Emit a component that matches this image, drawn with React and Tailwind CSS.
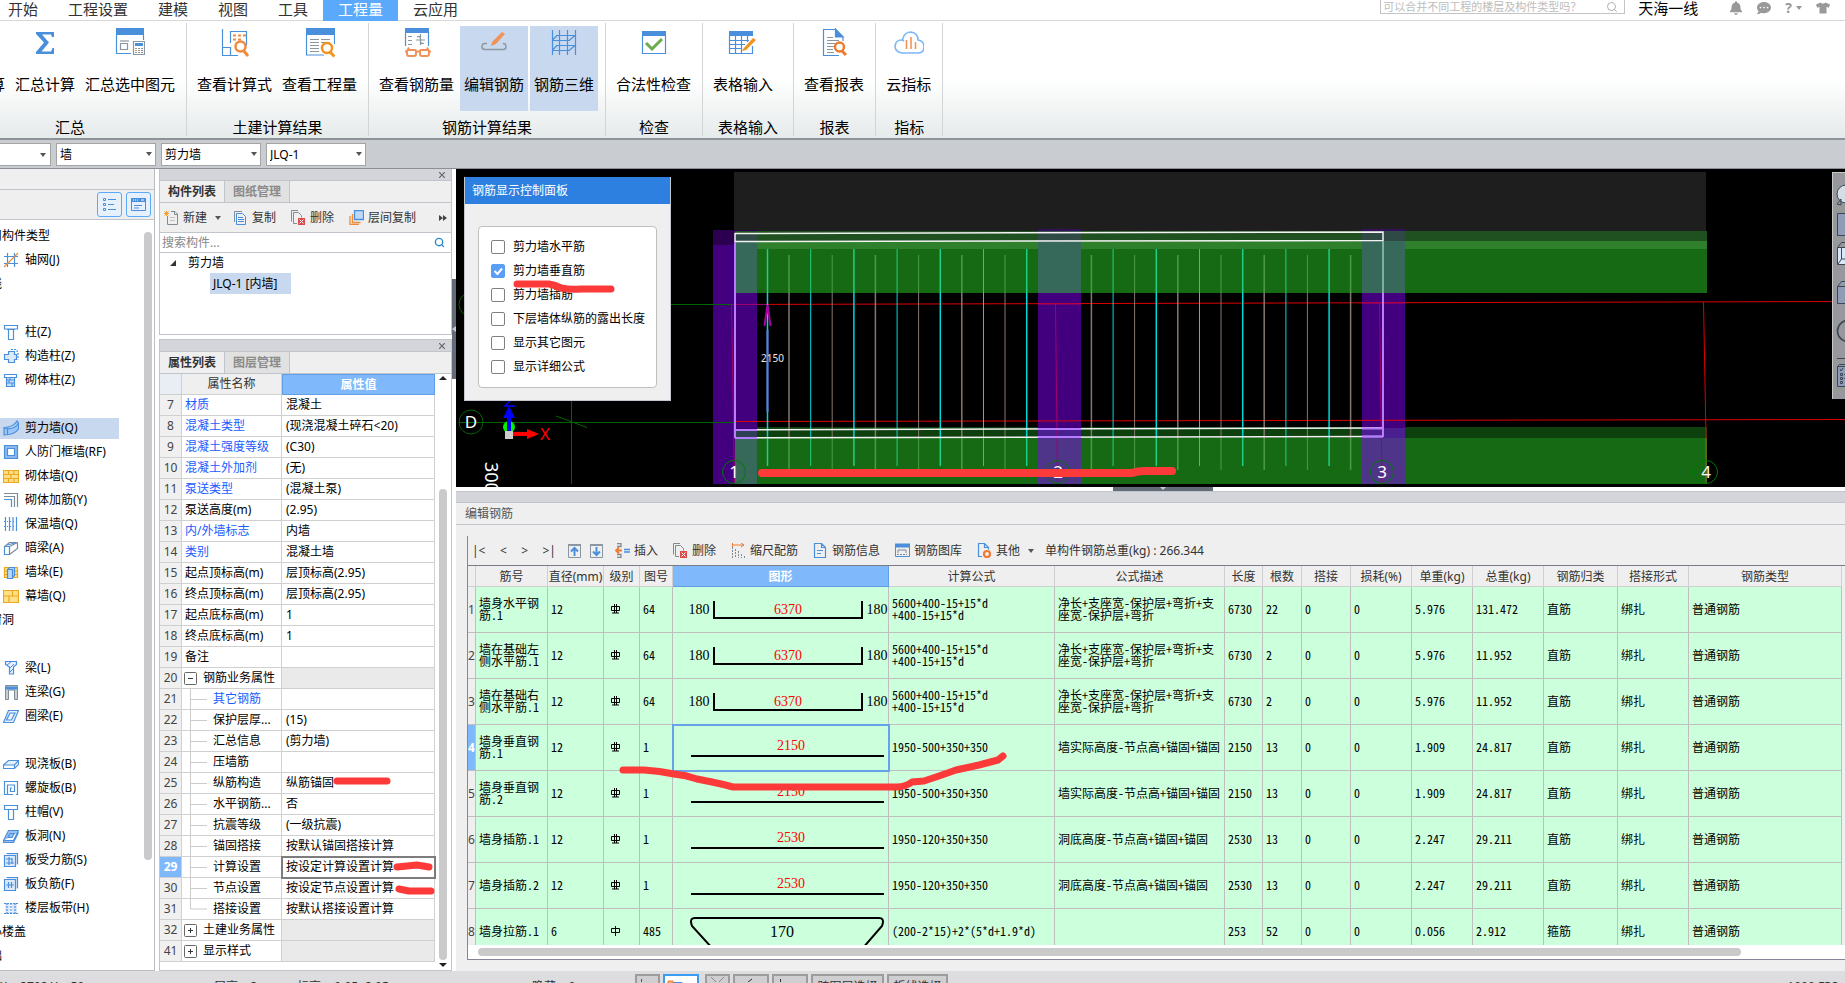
import { Search } from "lucide-react";
import { FaBell, FaCommentDots, FaTshirt } from "react-icons/fa";
import clsx from "clsx";

const BLUE = "#4a8fdc";
const ORANGE = "#f08a3c";

const tabs = ["开始", "工程设置", "建模", "视图", "工具", "工程量", "云应用"];

const ribbonGroups = [
  {
    label: "汇总",
    className: "-ml-[46px] w-[232px] justify-end pr-[7px]",
    items: [
      { label: "算" },
      { label: "汇总计算", icon: "sigma" },
      { label: "汇总选中图元", icon: "sumSelected" },
    ],
  },
  {
    label: "土建计算结果",
    className: "pr-[7px] pl-1.5",
    items: [
      { label: "查看计算式", icon: "formula" },
      { label: "查看工程量", icon: "quantity" },
    ],
  },
  {
    label: "钢筋计算结果",
    className: "pr-[7px] pl-1.5",
    items: [
      { label: "查看钢筋量", icon: "rebarQty" },
      { label: "编辑钢筋", icon: "rebarEdit", active: true },
      { label: "钢筋三维", icon: "rebar3d", active: true },
    ],
  },
  {
    label: "检查",
    className: "pr-[7px] pl-1.5",
    items: [{ label: "合法性检查", icon: "check" }],
  },
  {
    label: "表格输入",
    className: "pr-4 pl-1.5",
    items: [{ label: "表格输入", icon: "sheet" }],
  },
  {
    label: "报表",
    className: "pr-[7px] pl-1.5",
    items: [{ label: "查看报表", icon: "report" }],
  },
  {
    label: "指标",
    className: "pr-[7px] pl-1.5",
    items: [{ label: "云指标", icon: "cloud" }],
  },
];

const ribbonIcons = {
  sigma: (
    <path
      d="M6 4h18v5h-2l-1-2.5H12l7 8-7.5 9H21l1.500-3.500H24V26H6v-2l8-9.500L6 6z"
      fill={BLUE}
    />
  ),
  sumSelected: (
    <g fill="none" stroke={BLUE} strokeWidth="1.200">
      <path d="M1 0h28v7H1z" fill={BLUE} stroke="none" />
      <path d="M1.500 7v18.500H16M28.500 7v5" />
      <path d="M5 13h9" stroke="#8a979f" />
      <path d="M5.500 15.500h7v6h-7z" stroke="#8a979f" />
      <path d="M18.500 13.500h11v13h-11z" fill="#fff" stroke="#8a979f" />
      <path d="M20 15h8v3h-8z" fill={BLUE} stroke="none" />
      <path
        d="M20 20.500h2m1 0h2m1 0h2M20 22.500h2m1 0h2m1 0h2M20 24.500h2m1 0h2m1 0h2"
        stroke="#8a979f"
      />
      <path d="M20 22.500h2" stroke={ORANGE} />
    </g>
  ),
  formula: (
    <g fill="none" stroke={BLUE} strokeWidth="1.200">
      <path d="M2.500 1v26.500H18M2.500 19.500h8v8M10.500 15V3.500h16v14" />
      <path
        d="M13 7.500h3m2 0h3m2 0h3M13 11.500h3m2 0h3"
        stroke={ORANGE}
        strokeWidth="2"
      />
      <circle cx="20.500" cy="18.500" r="5" stroke={ORANGE} strokeWidth="2.500" fill="#fff" />
      <path d="M23 22l5 6" stroke={ORANGE} strokeWidth="3" />
    </g>
  ),
  quantity: (
    <g fill="none" stroke={BLUE} strokeWidth="1.200">
      <path d="M1 0h29v7H1z" fill={BLUE} stroke="none" />
      <path d="M1.500 7v20H19M29.500 7v9" />
      <path
        d="M5 11.500h9m2 0h9M5 14.500h9m2 0h9M5 17.500h9M5 20.500h9M5 23.500h9"
        stroke="#8a979f"
      />
      <circle cx="22" cy="20" r="5" stroke="#f0941e" strokeWidth="2.500" fill="#fff" />
      <path d="M25 24l4.500 4.500" stroke="#f0941e" strokeWidth="3" />
    </g>
  ),
  rebarQty: (
    <g fill="none" stroke={BLUE} strokeWidth="1.200">
      <path d="M3 0h24v5H3z" fill={BLUE} stroke="none" />
      <path d="M3.500 5v13M26.500 5v13" />
      <path
        d="M6 8.500h4M6 12.500h4M6 16.500h4M14 12h9M18.500 6v11M15 9q3.500-2 3.500 3M22 15q-3.500 2-3.500-3"
        stroke="#8a979f"
      />
      <g stroke="#f0935a" strokeWidth="2">
        <path d="M5 23q0-1 1-1h7q1 0 1 1v3q0 2-2 2H7q-2 0-2-2zM18 23q0-1 1-1h7q1 0 1 1v3q0 2-2 2h-5q-2 0-2-2zM14 23.500h4M3 23.500h2l2-4M29 23.500h-2l-2-4" />
      </g>
    </g>
  ),
  rebarEdit: (
    <g fill="none" strokeWidth="1.400">
      <path d="M8 15.500H6q-3 0-3 3.500 0 2.500 3 2.500h18q3 0 3-2.500 0-3.500-3-3.500" stroke="#8a979f" />
      <path d="M12 18l1-4L23 4l3 2-9 10z" fill="#f0935a" />
    </g>
  ),
  rebar3d: (
    <path
      d="M3.500 2v25M10.500 2v25M18.500 2v25M26.500 2v25M3 12.500h18M3 22.500h18M7 7.500h20M7 17.500h20M3 12.500l5-5M3 22.500l5-5M20 12.500l6-5M20 22.500l6-5"
      fill="none"
      stroke={BLUE}
      strokeWidth="1.200"
    />
  ),
  check: (
    <g fill="none">
      <path d="M3 3h24v5H3z" fill={BLUE} />
      <path d="M3.500 8v17.500h23V8" stroke={BLUE} strokeWidth="1.200" />
      <path d="M7 15l6 6 10-10" stroke="#6cab4f" strokeWidth="3" />
    </g>
  ),
  sheet: (
    <g fill="none" stroke={BLUE} strokeWidth="1.200">
      <path d="M1 3h24v5H1z" fill={BLUE} stroke="none" />
      <path d="M1.500 8v17.500h23V18M1 12.500h20M1 16.500h16M1 20.500h13M7.500 8v17M13.500 8v17M19.500 8v6" />
      <path d="M15 21l10-11 3 2-10 10-4 1z" fill="#f0941e" stroke="none" />
    </g>
  ),
  report: (
    <g fill="none" stroke={BLUE} strokeWidth="1.200">
      <path d="M20 27.500H4.500v-26h12L24 9v4" />
      <path d="M16.500 1v8H24z" fill={BLUE} />
      <path
        d="M8 9.500h6M8 12.500h12M8 15.500h8M8 18.500h7M8 21.500h6M8 24.500h7"
        stroke="#8a979f"
      />
      <circle cx="20.500" cy="19" r="4.500" stroke="#ee7c30" strokeWidth="2.500" fill="#fff" />
      <path d="M23 23l4 4" stroke="#ee7c30" strokeWidth="3" />
    </g>
  ),
  cloud: (
    <g fill="none" strokeWidth="1.600">
      <path
        d="M8 25q-7-1-7-7 1-6 6-6 2 0 3 1-2-1-1-3 2-6 8-6 7 1 7 8 6 1 6 7 0 6-6 6z"
        stroke="#7ab8f8"
      />
      <path d="M12.500 12v9M17 9v12M21.500 14v7" stroke="#f0935a" />
    </g>
  ),
};

const S = { fill: "none", stroke: BLUE, strokeWidth: 1.2 };
const typeIcons = {
  axis: (
    <g {...S}>
      <path d="M4.500 1v14M11.500 1v14M1 4.500h14M1 11.500h14" />
      <path d="M1 15L15 1" stroke={ORANGE} />
    </g>
  ),
  column: <path {...S} d="M1.500 1.500h13v3.500h-13zM4 5.500h8M5.500 5.500v10h5v-10" />,
  structColumn: (
    <g {...S}>
      <path d="M5.500 3.500h6v3h2v5h-2v3h-6v-3h-4v-5h4z" fill="#dbe9fb" />
      <path d="M8 1.500h5l2 3v7" strokeDasharray="2 1" />
    </g>
  ),
  brickColumn: (
    <g {...S}>
      <path d="M1.500 2.500h12v3h-12z" />
      <path d="M3.500 5.500h8v9h-8zM4 8h7M4 11h7M7 5.500V8M6 8v3M9 11v3" fill="#c9defa" />
    </g>
  ),
  shearWall: (
    <path {...S} d="M1 7.500q9 0 13-6.500l1.500 2v6q-4 6-14.500 6zM1 7.500L4.500 9v6M4.500 9Q12 9 15.500 3" fill="#9cc6fa" />
  ),
  frameWall: (
    <g {...S}>
      <path d="M1.500 1.500h13v13h-13z" fill="#8db8ee" />
      <path d="M4.500 4.500h7v7h-7z" fill="#fff" />
    </g>
  ),
  brickWall: (
    <path
      d="M.5 2.500h15v12H.5zM1 6.500h14M1 10.500h14M5.500 3v4M11 3v4M8 7v4M5.500 11v3M11 11v3"
      fill="#ffe08a"
      stroke="#eca71c"
      strokeWidth="1.200"
    />
  ),
  brickRebar: (
    <g {...S} stroke="#7f8c96">
      <path d="M1 1.500h13.500V15M1 4.500h10.500V15" />
      <path d="M1 7.500h7.500V15" stroke={BLUE} />
    </g>
  ),
  insulWall: (
    <g {...S}>
      <path d="M2.500 1v14M13.500 1v14" />
      <path d="M6.500 1v14M10 1v14" />
      <path d="M1 5.500h14M1 10.500h14" strokeDasharray="1 2" />
    </g>
  ),
  hiddenBeam: (
    <g {...S}>
      <path d="M1.500 6.500h5v8h-5z" />
      <path d="M1.500 6.500l5-4h8l-8 4M14.500 2.500v6l-8 6" stroke="#7f8c96" />
      <path d="M4 5l8-2" />
    </g>
  ),
  pier: (
    <g strokeWidth="1.200">
      <path d="M1.500 3.500h13v10h-13zM1 7h14M1 10.500h14" fill="#ffe08a" stroke="#eca71c" />
      <path d="M4.500 5.500h5v9h-5zM4.500 5.500l2-2h5v8l-2 2" fill="#b9d6fb" stroke={BLUE} />
    </g>
  ),
  curtain: (
    <path
      d="M.5 2.500h15v12H.5zM1 8h14M9.500 3v5M6 8v6"
      fill="#ffe08a"
      stroke="#eca71c"
      strokeWidth="1.200"
    />
  ),
  beam: (
    <g {...S}>
      <path d="M2.500 1.500h11v3l-3 2.500v7h-4V7l-4-2.500z" fill="#e8f1fd" />
      <path d="M4 5l4-3M7 8l4-4M7 12l3-3" strokeWidth="1" />
    </g>
  ),
  couple: (
    <g>
      <path d="M2.500 1.500h12v14h-3V6h-6v9.500h-3z" fill="#c8ced4" stroke="#7f8c96" />
      <path d="M3 2.500h11v3H3z" fill={BLUE} />
    </g>
  ),
  ring: <path {...S} d="M5.500 2.500h10l-5 12h-10zM7 5h5l-3.500 7h-5z" fill="#e8f1fd" />,
  slab: (
    <g {...S}>
      <path d="M.5 9l5-4.500h10l-4 4.500z" fill="#e8f1fd" />
      <path d="M.5 9v3.500h11l4-4V4.500M11.500 9v3" />
    </g>
  ),
  spiral: <path {...S} d="M13 14.500h1.500v-13h-13v13H10M4.500 14V5h7v6.500h-4V8H9" />,
  cap: <path {...S} d="M1.500 1.500h13v4h-13zM3 5.500h9M5.500 6v9.500h5V6" />,
  hole: <path {...S} d="M5.500 2.500h10l-5 10h-10zM.500 12.500v2h10l5-10M7 5.500h4l-2 4h-4z" fill="#9cc0ef" />,
  slabRebar: (
    <g {...S}>
      <path d="M1.500 3.500h11v11h-11zM3.500 1.500h11v11" fill="#dbe9fb" />
      <path d="M3 7h6M3 11h8M6 5v8M9 6v6" />
    </g>
  ),
  slabNeg: (
    <g {...S}>
      <path d="M1.500 3.500h11v11h-11zM3.500 1.500h11v11" fill="#dbe9fb" />
      <path d="M3 9h8M5.500 6v6M8.500 6v6" />
    </g>
  ),
  strip: (
    <g {...S}>
      <path d="M2 3.500h5v10H2zM9 3.500h5v10H9z" fill="#dbe9fb" stroke="none" />
      <path d="M1 3.500h14M4 3v11M12 3v11M8 3v11M1 13.500h14" strokeDasharray="2 1" />
    </g>
  ),
};

// `head` rows are category captions that scroll out under the left edge
const typeRows = [
  { head: "用构件类型" },
  { icon: "axis", label: "轴网(J)" },
  { head: "线" },
  { head: "" },
  { icon: "column", label: "柱(Z)" },
  { icon: "structColumn", label: "构造柱(Z)" },
  { icon: "brickColumn", label: "砌体柱(Z)" },
  { head: "" },
  { icon: "shearWall", label: "剪力墙(Q)", active: true },
  { icon: "frameWall", label: "人防门框墙(RF)" },
  { icon: "brickWall", label: "砌体墙(Q)" },
  { icon: "brickRebar", label: "砌体加筋(Y)" },
  { icon: "insulWall", label: "保温墙(Q)" },
  { icon: "hiddenBeam", label: "暗梁(A)" },
  { icon: "pier", label: "墙垛(E)" },
  { icon: "curtain", label: "幕墙(Q)" },
  { head: "窗洞" },
  { head: "" },
  { icon: "beam", label: "梁(L)" },
  { icon: "couple", label: "连梁(G)" },
  { icon: "ring", label: "圈梁(E)" },
  { head: "" },
  { icon: "slab", label: "现浇板(B)" },
  { icon: "spiral", label: "螺旋板(B)" },
  { icon: "cap", label: "柱帽(V)" },
  { icon: "hole", label: "板洞(N)" },
  { icon: "slabRebar", label: "板受力筋(S)" },
  { icon: "slabNeg", label: "板负筋(F)" },
  { icon: "strip", label: "楼层板带(H)" },
  { head: "心楼盖" },
  { head: "础" },
];

const props = [
  [7, "材质", "混凝土", "link"],
  [8, "混凝土类型", "(现浇混凝土碎石<20)", "link"],
  [9, "混凝土强度等级", "(C30)", "link"],
  [10, "混凝土外加剂", "(无)", "link"],
  [11, "泵送类型", "(混凝土泵)", "link"],
  [12, "泵送高度(m)", "(2.95)"],
  [13, "内/外墙标志", "内墙", "link"],
  [14, "类别", "混凝土墙", "link"],
  [15, "起点顶标高(m)", "层顶标高(2.95)"],
  [16, "终点顶标高(m)", "层顶标高(2.95)"],
  [17, "起点底标高(m)", "1"],
  [18, "终点底标高(m)", "1"],
  [19, "备注", ""],
  [20, "钢筋业务属性", "", "open"],
  [21, "其它钢筋", "", "child link"],
  [22, "保护层厚...", "(15)", "child"],
  [23, "汇总信息", "(剪力墙)", "child"],
  [24, "压墙筋", "", "child"],
  [25, "纵筋构造", "纵筋锚固", "child"],
  [26, "水平钢筋...", "否", "child"],
  [27, "抗震等级", "(一级抗震)", "child"],
  [28, "锚固搭接", "按默认锚固搭接计算", "child"],
  [29, "计算设置", "按设定计算设置计算", "child active"],
  [30, "节点设置", "按设定节点设置计算", "child"],
  [31, "搭接设置", "按默认搭接设置计算", "child last"],
  [32, "土建业务属性", "", "closed"],
  [41, "显示样式", "", "closed"],
];

const columns = [
  ["", "w-[8px]"],
  ["筋号", "w-[72px]"],
  ["直径(mm)", "w-[56px]"],
  ["级别", "w-[36px]"],
  ["图号", "w-[33px]"],
  ["图形", "w-[216px]"],
  ["计算公式", "w-[166px]"],
  ["公式描述", "w-[170px]"],
  ["长度", "w-[38px]"],
  ["根数", "w-[39px]"],
  ["搭接", "w-[49px]"],
  ["损耗(%)", "w-[61px]"],
  ["单重(kg)", "w-[61px]"],
  ["总重(kg)", "w-[71px]"],
  ["钢筋归类", "w-[74px]"],
  ["搭接形式", "w-[71px]"],
  ["钢筋类型", "w-auto"],
];

const hookFormula = "5600+400-15+15*d\n+400-15+15*d";
const hookDesc = "净长+支座宽-保护层+弯折+支\n座宽-保护层+弯折";
const rebars = [
  ["墙身水平钢\n筋.1", "12", "C", "64", "hook:6370", hookFormula, hookDesc, "6730", "22", "5.976", "131.472", "直筋"],
  ["墙在基础左\n侧水平筋.1", "12", "C", "64", "hook:6370", hookFormula, hookDesc, "6730", "2", "5.976", "11.952", "直筋"],
  ["墙在基础右\n侧水平筋.1", "12", "C", "64", "hook:6370", hookFormula, hookDesc, "6730", "2", "5.976", "11.952", "直筋"],
  ["墙身垂直钢\n筋.1", "12", "C", "1", "line:2150", "1950-500+350+350", "墙实际高度-节点高+锚固+锚固", "2150", "13", "1.909", "24.817", "直筋"],
  ["墙身垂直钢\n筋.2", "12", "C", "1", "line:2150", "1950-500+350+350", "墙实际高度-节点高+锚固+锚固", "2150", "13", "1.909", "24.817", "直筋"],
  ["墙身插筋.1", "12", "C", "1", "line:2530", "1950-120+350+350", "洞底高度-节点高+锚固+锚固", "2530", "13", "2.247", "29.211", "直筋"],
  ["墙身插筋.2", "12", "C", "1", "line:2530", "1950-120+350+350", "洞底高度-节点高+锚固+锚固", "2530", "13", "2.247", "29.211", "直筋"],
  ["墙身拉筋.1", "6", "A", "485", "tie:170", "(200-2*15)+2*(5*d+1.9*d)", "", "253", "52", "0.056", "2.912", "箍筋"],
];

function Caret({ className }) {
  return (
    <svg viewBox="0 0 6 4" className={clsx("h-1 w-1.5 shrink-0", className)}>
      <path d="M0 0h6L3 4z" fill="#555" />
    </svg>
  );
}

function TabBar() {
  return (
    <div className="flex h-[21px] shrink-0 items-start border-b border-[#d8d8d8] bg-white">
      <nav className="-ml-[7px] flex text-[15px] leading-4">
        {tabs.map((tab) => (
          <button
            key={tab}
            className={clsx(
              "h-[21px] shrink-0 px-[15px] pb-1",
              tab === "工程量" ? "bg-[#5ba9fa] text-white" : "text-[#333]"
            )}
          >
            {tab}
          </button>
        ))}
      </nav>
      <div className="ml-auto flex items-start">
        <label className="flex h-[14px] w-[245px] items-center border border-t-0 border-[#c4c4c4] px-0.5">
          <input
            aria-label="搜索"
            placeholder="可以合并不同工程的楼层及构件类型吗？"
            className="h-[13px] min-w-0 flex-1 text-[11px] leading-[13px] outline-none placeholder:text-[#bdbdbd]"
          />
          <Search className="mr-1 size-3 text-[#b0b0b0]" />
        </label>
        <span className="ml-[13px] w-[62px] text-[15px] leading-4 text-black">
          天海一线
        </span>
        <div className="mt-px ml-[29px] flex items-center gap-[14px] pr-[15px] text-[#999]">
          <FaBell className="size-[14px]" />
          <FaCommentDots className="size-[14px]" />
          <button className="flex items-center gap-1 text-[14px] leading-[14px] font-bold">
            ?
            <svg viewBox="0 0 6 4" className="h-1 w-1.5">
              <path d="M0 0h6L3 4z" fill="#999" />
            </svg>
          </button>
          <FaTshirt className="size-[14px]" />
        </div>
      </div>
    </div>
  );
}

function Ribbon() {
  return (
    <div className="flex h-[119px] shrink-0 border-b-2 border-[#8e9299] bg-linear-to-b from-white from-50% to-[#e5eaea] pt-0.5">
      {ribbonGroups.map((group) => (
        <section
          key={group.label}
          className="mb-0.5 flex shrink-0 flex-col border-r border-[#d2d4d6] text-[15px] text-black"
        >
          <div className={clsx("flex gap-0.5 pt-[3px]", group.className)}>
            {group.items.map((item) => (
              <button
                key={item.label}
                className={clsx(
                  "flex h-[85px] shrink-0 flex-col items-center px-1 pt-0.5",
                  item.active && "bg-[#c8d8ef]"
                )}
              >
                {item.icon ? (
                  <svg viewBox="0 0 30 30" className="size-[30px]">
                    {ribbonIcons[item.icon]}
                  </svg>
                ) : (
                  <span className="h-[30px]" />
                )}
                <span className="mt-4 leading-5">{item.label}</span>
              </button>
            ))}
          </div>
          <h2
            className={clsx(
              "mt-1.5 text-center leading-5",
              group.label === "汇总" && "-ml-[46px]"
            )}
          >
            {group.label}
          </h2>
        </section>
      ))}
    </div>
  );
}

function ContextBar() {
  return (
    <div className="flex h-[29px] shrink-0 items-center gap-[5px] border-b border-[#8b8f96] bg-[#c9ccd1] text-xs">
      <div className="h-[23px] w-[51px] border border-l-0 border-[#a4a4a4] bg-white">
        <Caret className="mt-[9px] ml-[40px]" />
      </div>
      {["墙", "剪力墙", "JLQ-1"].map((value) => (
        <label key={value} className="relative">
          <select
            aria-label={value}
            className="h-[23px] w-[100px] appearance-none border border-[#a4a4a4] bg-white pt-0.5 pl-[3px] text-black"
          >
            <option>{value}</option>
          </select>
          <Caret className="absolute top-[9px] right-1" />
        </label>
      ))}
    </div>
  );
}

function TypeTree() {
  return (
    <aside className="flex w-[155px] shrink-0 flex-col border-r border-b border-[#b9bdc4] bg-white">
      <div className="h-[21px] border-b border-[#c0c4cb] bg-[#efefef]" />
      <div className="flex h-[30px] items-center justify-end gap-1 border-b border-[#c0c4cb] bg-[#efefef] pr-[3px]">
        <button
          aria-label="列表"
          className="flex size-[25px] items-center justify-center rounded-[3px] border border-[#5ba9fa] bg-[#e6f1fd]"
        >
          <svg viewBox="0 0 15 15" className="size-[15px]" fill="none" stroke={BLUE}>
            <path d="M1.500 1.500h2v2h-2zM1.500 6.500h2v2h-2zM1.500 11.500h2v2h-2zM6 2.500h8M6 7.500h6M6 12.500h8" />
          </svg>
        </button>
        <button
          aria-label="窗口"
          className="flex size-[25px] items-center justify-center rounded-[3px] border border-[#5ba9fa] bg-[#e6f1fd]"
        >
          <svg viewBox="0 0 15 15" className="size-[15px]" fill="none" stroke={BLUE}>
            <path d="M0 1h15v4H0z" fill={BLUE} stroke="none" />
            <path d="M.5 5v8.500h14V5M3 8.500h8M3 11h5" />
            <path d="M2 3h1m1 0h1m1 0h1M10 3h3" stroke="#fff" />
          </svg>
        </button>
      </div>
      <div className="flex min-h-0 flex-1 overflow-hidden pt-1">
        <ul className="w-[144px] text-xs text-black">
          {typeRows.map((row, i) => (
            <li key={i} className="flex h-6 items-center">
              {row.icon ? (
                <button
                  className={clsx(
                    "flex h-[21px] items-center gap-1.5 pr-2 pl-[3px] whitespace-nowrap",
                    row.active && "w-[119px] bg-[#c8d8ef]"
                  )}
                >
                  <svg viewBox="0 0 16 16" className="size-4 shrink-0">
                    {typeIcons[row.icon]}
                  </svg>
                  {row.label}
                </button>
              ) : (
                <span className="-ml-2.5">{row.head}</span>
              )}
            </li>
          ))}
        </ul>
        <div className="mt-2 mb-[110px] w-2 rounded-full bg-[#cacaca]" />
      </div>
    </aside>
  );
}

function PanelHead({ active, other }) {
  return (
    <>
      <div className="flex h-3 shrink-0 items-center justify-end border-b border-[#c0c4cb] bg-[#d3d5da] pr-1.5">
        <svg viewBox="0 0 6 6" className="size-1.5">
          <path d="M0 0l6 6M6 0L0 6" stroke="#666" strokeWidth="1.200" />
        </svg>
      </div>
      <div className="flex h-[22px] shrink-0 border-b border-[#c0c4cb] bg-[#efefef] text-xs font-semibold">
        <button className="w-[65px] border-r border-[#c0c4cb] text-[#333]">{active}</button>
        <button className="w-[65px] border-r border-[#c0c4cb] bg-[#e1e1e1] text-[#8a8a8a]">
          {other}
        </button>
      </div>
    </>
  );
}

const toolIcons = {
  add: (
    <g fill="none" stroke="#7f8c96">
      <path d="M3.500 6v8.500h10V4L11 1.500H7M10.500 1.500v3h3" />
      <path d="M6 7.500h5M6 10.500h5" stroke="#c0c6cb" />
      <path d="M0 3.500h5M2.500 1v5M.5 1.500l4 4M4.500 1.500l-4 4" stroke="#f2a33a" />
    </g>
  ),
  copy: (
    <g fill="none" stroke="#7f8c96">
      <path d="M1.500 12V1.500H9" />
      <path d="M3.500 3.500h6l3 3v8h-9zM5 7.500h5M5 9.500h6M5 11.500h6" stroke={BLUE} />
    </g>
  ),
  remove: (
    <g fill="none" stroke="#7f8c96">
      <path d="M.5 11.500V.5H7M6 13.500H2.500v-11h5l3 3v2" />
      <path d="M7 8h7v7H7z" fill="#dc4a4a" stroke="none" />
      <path d="M8.500 9.500l4 4m0-4l-4 4" stroke="#fff" />
    </g>
  ),
  floors: (
    <g fill="none" stroke={ORANGE} strokeWidth="1.300">
      <path d="M1 6v8.500h9M3.500 4v8.500h8" />
      <path d="M5.500.5h9v9h-9z" fill="#bcd8fb" stroke={BLUE} />
    </g>
  ),
  up: (
    <g fill="none">
      <path d="M1.500 1.500h12v13h-12z" stroke="#8a97a2" />
      <path d="M1 1h13v2H1z" fill="#8a97a2" />
      <path d="M7.500 13V5M4 8.500L7.500 5 11 8.500" stroke={BLUE} strokeWidth="2" />
    </g>
  ),
  down: (
    <g fill="none">
      <path d="M1.500 1.500h12v13h-12z" stroke="#8a97a2" />
      <path d="M1 1h13v2H1z" fill="#8a97a2" />
      <path d="M7.500 4v8M4 8.500L7.500 12 11 8.500" stroke={BLUE} strokeWidth="2" />
    </g>
  ),
  insert: (
    <g fill="none" stroke="#7f8c96" strokeWidth="1.300">
      <path d="M2 .500h4v3H2M2 14.500h4v-3H2" />
      <path d="M9 6.500h6M9 9h6" stroke={BLUE} />
      <path d="M7 7.500H1M4 4.500l-3 3 3 3" stroke="#ee7c30" strokeWidth="1.800" />
    </g>
  ),
  scale: (
    <g fill="none" stroke="#7f8c96">
      <path d="M1.500 4v11M4.500 6v9M7.500 8v7M10.500 11v4M13.500 13v2" strokeDasharray="2 1" />
      <path d="M2 2h11M10 0l3 2-3 2M1.500 0v4" stroke="#ee7c30" />
    </g>
  ),
  info: (
    <g fill="none" stroke={BLUE} strokeWidth="1.200">
      <path d="M1.500.5h7l4 4v10h-11zM8.500.5v4h4" />
      <path d="M4 7.500h6M4 10.500h4" />
    </g>
  ),
  library: (
    <g fill="none" stroke={BLUE}>
      <path d="M0 1h15v3H0z" fill={BLUE} />
      <path d="M.5 4v9.500h14V4" />
      <path d="M3 10V7h8v3" stroke="#7f8c96" />
      <path d="M2 11.500h10" stroke="#7f8c96" strokeDasharray="2 1" />
    </g>
  ),
  other: (
    <g fill="none" stroke={BLUE} strokeWidth="1.200">
      <path d="M5 13.500H1.500V.5h6l4 4v2M7.500.5v4h4" />
      <circle cx="10" cy="11" r="3" stroke="#ee7c30" strokeWidth="2.200" />
    </g>
  ),
};

function Tool({ icon, children }) {
  return (
    <button
      className="flex shrink-0 items-center gap-1"
      aria-label={children ? undefined : icon}
    >
      <svg viewBox="0 0 15 15" className="size-[15px]">
        {toolIcons[icon]}
      </svg>
      {children}
    </button>
  );
}

function ComponentPanel() {
  return (
    <section className="flex h-[166px] shrink-0 flex-col border border-t-0 border-[#c0c4cb] bg-white text-xs">
      <PanelHead active="构件列表" other="图纸管理" />
      <div className="flex h-[30px] shrink-0 items-center gap-[15px] border-b border-[#c0c4cb] bg-[#efefef] pr-1 pl-1 text-[#333]">
        <div className="-mr-[3px] flex items-center gap-2">
          <Tool icon="add">新建</Tool>
          <Caret />
        </div>
        <Tool icon="copy">复制</Tool>
        <Tool icon="remove">删除</Tool>
        <Tool icon="floors">层间复制</Tool>
        <svg viewBox="0 0 8 6" className="ml-auto h-1.5 w-2">
          <path d="M0 0l4 3-4 3zM4 0l4 3-4 3z" fill="#444" />
        </svg>
      </div>
      <label className="flex h-5 shrink-0 items-center border-b border-[#c0c4cb] pr-1.5 pl-0.5">
        <input
          aria-label="搜索构件"
          placeholder="搜索构件..."
          className="min-w-0 flex-1 leading-4 outline-none placeholder:text-[#888]"
        />
        <Search className="size-[11px] text-[#2a8ac8]" strokeWidth={3} />
      </label>
      <div className="flex h-5 items-center gap-3 pl-2.5 text-black">
        <svg viewBox="0 0 6 6" className="size-1.5">
          <path d="M6 0v6H0z" fill="#333" />
        </svg>
        剪力墙
      </div>
      <button className="ml-[50px] flex h-[21px] w-[81px] items-center bg-[#c8d8ef] pl-[3px] text-black">
        JLQ-1 [内墙]
      </button>
    </section>
  );
}

function PropertyName({ name, kind }) {
  if (kind.includes("child")) {
    return (
      <div className="flex items-center">
        <svg viewBox="0 0 31 20" className="h-5 w-[31px] shrink-0">
          <path
            d={kind.includes("last") ? "M8.500 0v10H25" : "M8.500 0v20M8.500 10.500H25"}
            fill="none"
            stroke="#ccc"
          />
        </svg>
        {name}
      </div>
    );
  }
  if (kind === "open" || kind === "closed") {
    return (
      <div className="flex items-center gap-1.5 pl-0.5">
        <svg viewBox="0 0 13 13" className="size-[13px]">
          <rect x=".5" y=".5" width="12" height="12" rx="1" fill="#fff" stroke="#666" />
          <path d={kind === "open" ? "M4 6.500h5" : "M4 6.500h5M6.500 4v5"} stroke="#333" />
        </svg>
        {name}
      </div>
    );
  }
  return <div className="pl-[3px]">{name}</div>;
}

function PropertyPanel() {
  return (
    <section className="flex min-h-0 flex-1 flex-col overflow-hidden border border-[#c0c4cb] bg-white text-xs">
      <PanelHead active="属性列表" other="图层管理" />
      <div className="flex min-h-0 flex-1">
        <table className="h-fit w-[275px] table-fixed border-separate border-spacing-0 leading-4 text-black">
          <thead>
            <tr className="h-[21px]">
              <th className="w-[22px] border-r border-b border-[#d0d0d0] bg-[#e9eef5]" />
              <th className="w-[100px] border-r border-b border-[#d0d0d0] bg-[#efefef] p-0 font-normal text-[#333]">
                属性名称
              </th>
              <th className="border border-[#5e9fe8] bg-[#80b9fb] p-0 font-semibold text-white">
                属性值
              </th>
            </tr>
          </thead>
          <tbody>
            {props.map(([no, name, value, kind = ""]) => {
              const active = kind.includes("active");
              return (
                <tr key={no} className="h-[21px]">
                  <td
                    className={clsx(
                      "border-r border-b border-[#d0d0d0] p-0 text-center",
                      active ? "bg-[#80b9fb] font-bold text-white" : "bg-[#f0f0f0] text-[#444]"
                    )}
                  >
                    {no}
                  </td>
                  <td
                    className={clsx(
                      "overflow-hidden border-r border-b border-[#d0d0d0] p-0 whitespace-nowrap",
                      kind.includes("link") && "text-[#1a5cff]"
                    )}
                  >
                    <PropertyName name={name} kind={kind} />
                  </td>
                  <td
                    className={clsx(
                      "border-r border-b border-[#d0d0d0] py-0 pr-0 pl-1 whitespace-nowrap",
                      active && "outline-2 -outline-offset-1 outline-[#7d7d7d]",
                      (kind === "open" || kind === "closed") && "bg-[#eaeaea]"
                    )}
                  >
                    {value}
                  </td>
                </tr>
              );
            })}
          </tbody>
        </table>
        <div className="flex flex-1 flex-col items-center pt-0.5">
          <svg viewBox="0 0 8 4" className="h-1 w-2">
            <path d="M0 4h8L4 0z" fill="#222" />
          </svg>
          <div className="mt-[109px] mb-[3px] w-2 flex-1 rounded-full bg-[#cacaca]" />
          <svg viewBox="0 0 8 4" className="mb-[3px] h-1 w-2">
            <path d="M0 0h8L4 4z" fill="#222" />
          </svg>
        </div>
      </div>
    </section>
  );
}

const cyanBars = [0, 1, 2, 3, 4, 5, 6, 8, 9, 10, 11, 12, 13].map((i) => 767.5 + i * 43.2);
const grayBars = [0, 1, 2, 3, 4, 5, 7, 8, 9, 10, 11, 12, 13].map((i) => 789 + i * 43.2);
const axisMarks = [
  ["1", 734],
  ["2", 1058],
  ["3", 1382],
  ["4", 1706],
];

function Bars({ xs, top, bottom, onGreen, onBlack }) {
  return xs.map((x, i) => (
    <g key={x} strokeWidth={i % 2 ? 1 : 1.5}>
      <path d={`M${x} ${top}V293M${x} 438V${bottom}`} stroke={onGreen} />
      <path d={`M${x} 293V438`} stroke={onBlack} />
    </g>
  ));
}

function Scene() {
  return (
    <svg
      viewBox="456 169 1389 318"
      preserveAspectRatio="xMinYMin slice"
      className="h-full w-full"
      fontFamily="'Noto Sans', sans-serif"
    >
      <rect x="734" y="172" width="972" height="60" fill="#1e1e1e" />
      <rect x="713" y="230" width="44" height="15" fill="#2c0050" />
      <rect x="713" y="245" width="44" height="239" fill="#42007f" />
      <rect x="735" y="231" width="972" height="11" fill="#1f5020" />
      <rect x="735" y="241" width="972" height="8" fill="#2f802d" />
      <rect x="735" y="249" width="972" height="44" fill="#166a14" />
      <rect x="735" y="427" width="972" height="12" fill="#0e400e" />
      <rect x="735" y="438" width="972" height="46" fill="#166a14" />
      <rect x="735" y="233" width="22" height="9" fill="#2f4a44" />
      <rect x="735" y="242" width="22" height="51" fill="#37695a" />
      <rect x="735" y="293" width="22" height="137" fill="#42007f" />
      <rect x="735" y="430" width="22" height="8" fill="#2f3f55" />
      <rect x="735" y="438" width="22" height="46" fill="#37695a" />
      {[1038, 1362].map((x) => (
        <g key={x}>
          <rect x={x} y="229" width="43" height="3" fill="#35105a" />
          <rect x={x} y="231" width="43" height="11" fill="#2f4a44" />
          <rect x={x} y="241" width="43" height="52" fill="#37695a" />
          <rect x={x} y="293" width="43" height="135" fill="#42007f" />
          <rect x={x} y="428" width="43" height="10" fill="#4a2090" />
          <rect x={x} y="438" width="43" height="46" fill="#4f358a" />
        </g>
      ))}

      <g fill="none" stroke="#006400">
        <path d="M468 304.500h264M459 422.500h276M571.500 400v84M556 416l31 11.500" />
        <circle cx="471" cy="304.500" r="12" />
        <circle cx="471" cy="422" r="12" />
      </g>
      <g fill="none" stroke="#e00000">
        <path d="M732 304.500L1845 301.500M735 421.500L1845 419.500" />
        <path d="M1703.500 302l2.500 136" />
        <path d="M1706 438v46" stroke="#a06010" />
      </g>
      <g fill="none" stroke="#a0006e">
        <path d="M731.500 304l3 180M1055.500 304l2 180M1379.500 303l2.500 181M732 304.500h35M1038 304h43M1362 303h43" />
      </g>

      <Bars xs={grayBars} top={255} bottom={470} onGreen="#4f9a48" onBlack="#85776f" />
      <Bars xs={cyanBars} top={249} bottom={466} onGreen="#1fcf85" onBlack="#00d8d8" />

      <g fill="none" stroke="#f2f2f2" strokeWidth="1.500">
        <path d="M735 241.500v-8L1383 232v8.500zM735 429.800L1383 428M735 437.800L1383 436.500" />
      </g>
      <g fill="none" stroke="#b77cff" strokeWidth="2">
        <path d="M735 242v196M1383 293v144M735 438h22M1038 429h43M1038 437h43M1362 428.500h21M1362 436.500h21M735 430h22" />
        <path d="M1383 241v52" stroke="#7fb09d" />
      </g>

      <path d="M767.500 330v82" stroke="#6a78e8" strokeWidth="2" />
      <path d="M767.500 305l-3 21M767.500 305l3 21" stroke="#a800a8" strokeWidth="2" />
      <text x="761" y="362" fontSize="10" fill="#e8e8e8">
        2150
      </text>

      {axisMarks.map(([label, x]) => (
        <g key={label}>
          <circle cx={x} cy="472" r="11.500" fill="none" stroke="#007a00" />
          <text x={x} y="478" textAnchor="middle" fontSize="17" fill="#fff">
            {label}
          </text>
        </g>
      ))}
      <text x="471" y="428" textAnchor="middle" fontSize="17" fill="#fff">
        D
      </text>
      <text x="485" y="462" fontSize="18" fill="#fff" transform="rotate(90 485 462)">
        300
      </text>

      <circle cx="509" cy="427" r="6" fill="#00f000" />
      <path d="M507 432V418h-4l6-12 6 12h-4v14z" fill="#0000ff" />
      <path d="M504 397h10l-9 9h10" fill="none" stroke="#0000ff" strokeWidth="1.500" />
      <path d="M512 432h15v-3l12 5-12 5v-3h-15z" fill="#ff0000" />
      <rect x="505" y="431" width="8" height="8" fill="#ccc" />
      <text x="540" y="440" fontSize="17" fill="#ff0000">
        X
      </text>
    </svg>
  );
}

function ViewTools() {
  return (
    <div className="absolute top-[3px] right-0 w-[13px] overflow-hidden border-t border-l border-[#c8c8c8] bg-[#96989b]">
      <svg viewBox="0 0 12 226" className="block h-[226px] w-3" fill="none" stroke="#3c4654">
        <circle cx="13" cy="21" r="9" fill="#d5dde6" />
        <path d="M4 31l4-5v6z" />
        <path d="M4.500 40.500H16v22H4.500z" fill="#8d9db5" />
        <path d="M4.500 74.500H16v17H4.500z" fill="#d9e8fb" />
        <path d="M4.500 74.500l4-5H16M8.500 75v11L5 91M8.500 86H14" />
        <path d="M4.500 113.500H16v17H4.500zM4.500 113.500l4-5H16" fill="#8d9db5" />
        <circle cx="15" cy="158" r="10.500" strokeWidth="1.600" />
        <path d="M4 185.500h8" />
        <path d="M4.500 193.500H16v20H4.500zM4.500 193.500l2-2H16" fill="#8d9db5" />
        <path d="M7 196l1 2 2-3M7.500 200.500h2v2h-2zM7.500 204.500h2v2h-2zM7.500 208.500h2v2h-2zM11 201.500h1M11 205.500h1" />
      </svg>
    </div>
  );
}

const displayOptions = [
  "剪力墙水平筋",
  "剪力墙垂直筋",
  "剪力墙插筋",
  "下层墙体纵筋的露出长度",
  "显示其它图元",
  "显示详细公式",
];

function DisplayPanel() {
  return (
    <div className="absolute top-2 left-2 w-[207px] border border-t-0 border-[#c4c8ce] bg-[#efefef] pb-3 text-xs">
      <h2 className="h-[27px] bg-[#2d80e0] pl-[7px] leading-[27px] text-white">
        钢筋显示控制面板
      </h2>
      <div className="mx-[13px] mt-[22px] flex flex-col rounded-sm border border-[#bfbfbf] bg-white py-2 pl-3">
        {displayOptions.map((option, i) => (
          <label key={option} className="relative flex h-6 items-center gap-2 text-black">
            <input
              type="checkbox"
              defaultChecked={i === 1}
              className="size-[14px] appearance-none rounded-xs border border-[#808080] bg-white checked:border-[#5a9ff5] checked:bg-[#5a9ff5]"
            />
            {i === 1 && (
              <svg viewBox="0 0 14 14" className="absolute left-0 size-[14px]">
                <path d="M3.500 7l3 3 4.500-5.500" fill="none" stroke="#fff" strokeWidth="2" />
              </svg>
            )}
            {option}
          </label>
        ))}
      </div>
    </div>
  );
}

function Shape({ spec }) {
  const [kind, size] = spec.split(":");
  return (
    <svg
      viewBox="0 0 215 45"
      className="block h-[45px] w-[215px]"
      fontSize="14"
      fontFamily="'Liberation Serif', serif"
      textAnchor="middle"
    >
      {kind === "hook" && (
        <>
          <path d="M41 14v17h148V14" fill="none" stroke="#000" strokeWidth="2" />
          <text x="26" y="27">180</text>
          <text x="204" y="27">180</text>
          <text x="115" y="27" fill="#f00">{size}</text>
        </>
      )}
      {kind === "line" && (
        <>
          <path d="M18 31h193" stroke="#000" strokeWidth="2" />
          <text x="118" y="25" fill="#f00">{size}</text>
        </>
      )}
      {kind === "tie" && (
        <>
          <path
            d="M40 40L19 17q-3-8 3-8h184q6 0 3 8L189 40"
            fill="none"
            stroke="#000"
            strokeWidth="2"
          />
          <text x="109" y="28" fontSize="16">{size}</text>
        </>
      )}
    </svg>
  );
}

function Grade({ type }) {
  return (
    <svg viewBox="0 0 9 10" className="ml-1 h-2.5 w-[9px]" fill="none" stroke="#000">
      <path
        d={
          type === "A"
            ? "M.5 2.500h8v4h-8zM4.500 0v10"
            : "M.5 2.500h8v4h-8zM3.500 0v9M5.500 0v9M1 9h7"
        }
      />
    </svg>
  );
}

function RebarTable() {
  const cell =
    "border-r border-b border-[#bfbfbf] bg-[#ccffdb] pt-0 pr-0 pb-0.5 pl-[3px] whitespace-pre";
  return (
    <table className="w-full table-fixed border-separate border-spacing-0 text-xs leading-3 text-black">
      <colgroup>
        {columns.map(([name, width]) => (
          <col key={name} className={width} />
        ))}
      </colgroup>
      <thead>
        <tr className="h-[21px]">
          {columns.map(([name]) => (
            <th
              key={name}
              className={clsx(
                "border-r border-b px-0 pt-0.5 pb-0 leading-4 whitespace-nowrap",
                name === "图形"
                  ? "border-[#5e9fe8] bg-[#80b9fb] font-semibold text-white"
                  : "border-[#cfcfcf] bg-[#efefef] font-normal text-[#333]"
              )}
            >
              {name}
            </th>
          ))}
        </tr>
      </thead>
      <tbody className="font-['Noto_Sans_Mono_CJK_SC','Liberation_Mono','Noto_Sans_CJK_SC',monospace]">
        {rebars.map((r, i) => (
          <tr key={i} className="h-[46px]">
            <td
              className={clsx(
                "border-r border-b border-[#bfbfbf] p-0 text-center font-['Noto_Sans',sans-serif]",
                i === 3 ? "bg-[#80b9fb] font-bold text-white" : "bg-[#efefef] text-[#444]"
              )}
            >
              {i + 1}
            </td>
            <td className={cell}>{r[0]}</td>
            <td className={cell}>{r[1]}</td>
            <td className={cell}>
              <Grade type={r[2]} />
            </td>
            <td className={cell}>{r[3]}</td>
            <td
              className={clsx(
                "border-r border-b border-[#bfbfbf] bg-[#ccffdb] p-0",
                i === 3 && "outline-2 -outline-offset-1 outline-[#67a3e8]"
              )}
            >
              <Shape spec={r[4]} />
            </td>
            <td className={cell}>{r[5]}</td>
            <td className={cell}>{r[6]}</td>
            <td className={cell}>{r[7]}</td>
            <td className={cell}>{r[8]}</td>
            <td className={cell}>0</td>
            <td className={cell}>0</td>
            <td className={cell}>{r[9]}</td>
            <td className={cell}>{r[10]}</td>
            <td className={cell}>{r[11]}</td>
            <td className={cell}>绑扎</td>
            <td className={cell}>普通钢筋</td>
          </tr>
        ))}
      </tbody>
    </table>
  );
}

function RebarEditor() {
  return (
    <section className="flex min-h-0 flex-1 flex-col bg-[#efefef] text-xs">
      <div className="h-3 shrink-0 border-y border-[#c0c4cb] bg-[#d3d5da]" />
      <h2 className="h-[22px] shrink-0 border-b border-[#c0c4cb] pl-[9px] leading-[22px] text-[#555]">
        编辑钢筋
      </h2>
      <div className="mt-[11px] ml-[11px] flex min-h-0 flex-1 flex-col border-b border-l border-[#85859a]">
        <div className="flex h-[30px] shrink-0 items-center gap-[15px] border-b border-[#7b7b88] pl-1 text-[#333]">
          <div className="flex w-[84px] justify-between">
            <button>|&lt;</button>
            <button>&lt;</button>
            <button>&gt;</button>
            <button>&gt;|</button>
          </div>
          <div className="-ml-1 flex gap-[7px]">
            <Tool icon="up" />
            <Tool icon="down" />
          </div>
          <div className="-ml-1 flex">
            <Tool icon="insert">插入</Tool>
          </div>
          <Tool icon="remove">删除</Tool>
          <Tool icon="scale">缩尺配筋</Tool>
          <Tool icon="info">钢筋信息</Tool>
          <Tool icon="library">钢筋图库</Tool>
          <div className="flex items-center gap-2">
            <Tool icon="other">其他</Tool>
            <Caret />
          </div>
          <span className="-ml-1">单构件钢筋总重(kg) : 266.344</span>
        </div>
        <div className="h-[379px] overflow-hidden pr-[3px]">
          <RebarTable />
        </div>
        <div className="flex min-h-0 flex-1 items-center bg-white pr-[104px] pl-2.5">
          <div className="h-2 flex-1 rounded-full bg-[#cacaca]" />
        </div>
      </div>
      <div className="h-[11px] shrink-0" />
    </section>
  );
}

function StatusBar() {
  const box = "h-6 shrink-0 border-2 border-[#9c9c9c] bg-[#cfcfd1]";
  return (
    <footer className="flex h-3 shrink-0 overflow-hidden bg-[#dddde0] pt-[3px] text-xs leading-[26px] text-[#333]">
      <span className="w-[214px] shrink-0">X = 3792 Y = 50</span>
      <span className="w-[83px] shrink-0">层高:&nbsp;&nbsp;&nbsp;3</span>
      <span className="w-[235px] shrink-0">标高:&nbsp;&nbsp;-0.05~2.95</span>
      <span className="w-[103px] shrink-0">隐藏:&nbsp;&nbsp;&nbsp;0</span>
      <div className="flex gap-[3px]">
        <button aria-label="正交" className={clsx(box, "w-[25px]")}>
          <svg viewBox="0 0 21 8" className="-mt-3 h-2 w-[21px]">
            <path d="M4.500 5v3" stroke="#555" />
          </svg>
        </button>
        <button aria-label="捕捉" className="h-6 w-9 shrink-0 border-2 border-[#3a9bf4] bg-white">
          <svg viewBox="0 0 20 8" className="-mt-2 ml-0.5 h-2 w-5" fill="none">
            <path d="M1 3h5v5H1z" fill="#f6a868" stroke="#ee7c30" />
            <path d="M6 4.500h9V8" stroke={BLUE} />
          </svg>
        </button>
        <button aria-label="交点" className={clsx(box, "ml-[3px] w-[25px]")}>
          <svg viewBox="0 0 21 8" className="-mt-3 h-2 w-[21px]">
            <path d="M4 3l5 5M17 3l-5 5" stroke="#888" />
          </svg>
        </button>
        <button aria-label="垂点" className={clsx(box, "w-9")}>
          <svg viewBox="0 0 32 8" className="-mt-3 h-2 w-8">
            <path d="M17 5l-4 3" stroke="#333" />
          </svg>
        </button>
        <button aria-label="中点" className={clsx(box, "w-9")}>
          <svg viewBox="0 0 32 8" className="-mt-3 h-2 w-8">
            <path d="M6.500 5v3" stroke="#333" />
          </svg>
        </button>
        <button className={clsx(box, "w-[73px] leading-[22px]")}>跨图层选择</button>
        <button className={clsx(box, "w-[61px] leading-[22px]")}>折线选择</button>
      </div>
      <span className="ml-auto pr-[7px]">1000 FPS</span>
    </footer>
  );
}

// Freehand red marker strokes over the workspace
function MarkerStrokes() {
  return (
    <svg
      viewBox="0 0 1845 983"
      className="pointer-events-none absolute top-0 left-0 h-[983px] w-[1845px]"
      fill="none"
      stroke="#fd3a3a"
      strokeWidth="7"
      strokeLinecap="round"
      strokeLinejoin="round"
    >
      <path d="M517 284h32q6 1 12 4 10 2 20 1h30" />
      <path d="M762 473h370q6-2 12-2h28" strokeWidth="8" />
      <path d="M337 781h50" />
      <path d="M397 867l20-2 12 2" />
      <path d="M399 889l10 2 22 0" />
      <path d="M623 770h21q16 1 30 4 12 1 23 5l15 3q10 2 21 5h164q8 0 15-5l12-1 15-5 17-6 23-5 19-5 5-4" />
    </svg>
  );
}

export default function App() {
  return (
    <div className="relative flex h-screen flex-col overflow-hidden bg-white font-['Noto_Sans','Noto_Sans_CJK_SC',sans-serif]">
      <TabBar />
      <Ribbon />
      <ContextBar />
      <main className="flex min-h-0 flex-1">
        <TypeTree />
        <div className="ml-1 flex w-[293px] shrink-0 flex-col gap-1">
          <ComponentPanel />
          <PropertyPanel />
        </div>
        <div className="mt-[110px] flex h-[100px] w-1 shrink-0 items-center bg-[#636b77]">
          <svg viewBox="0 0 4 6" className="h-1.5 w-1">
            <path d="M4 0v6L0 3z" fill="#c8ccd2" />
          </svg>
        </div>
        <div className="flex min-w-0 flex-1 flex-col">
          <div className="relative h-[318px] shrink-0 overflow-hidden bg-black">
            <Scene />
            <DisplayPanel />
            <ViewTools />
          </div>
          <div className="flex h-1 shrink-0 justify-center bg-white pl-[25px]">
            <div className="flex w-[100px] justify-center bg-[#636b77]">
              <svg viewBox="0 0 6 3" className="h-[3px] w-1.5">
                <path d="M0 0h6L3 3z" fill="#c8ccd2" />
              </svg>
            </div>
          </div>
          <RebarEditor />
        </div>
      </main>
      <StatusBar />
      <MarkerStrokes />
    </div>
  );
}
